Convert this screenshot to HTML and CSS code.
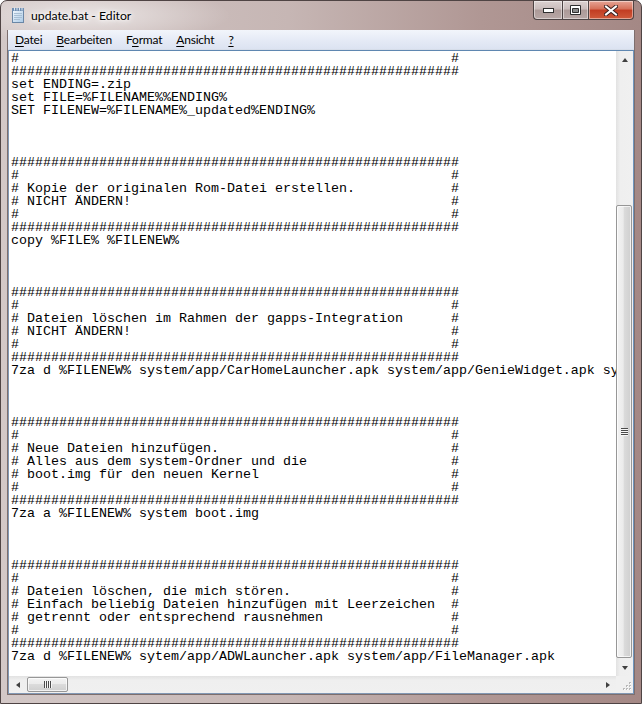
FILE: index.html
```html
<!DOCTYPE html>
<html>
<head>
<meta charset="utf-8">
<title>update.bat - Editor</title>
<link rel="stylesheet" href="styles.css">
</head>
<body>
<div class="window">
  <div class="titlebar">
    <div class="title">
      <svg class="app-icon" width="16" height="16" viewBox="0 0 16 16">
        <defs>
          <linearGradient id="pg" x1="0" y1="0" x2="1" y2="1">
            <stop offset="0" stop-color="#f4f9fe"/>
            <stop offset="1" stop-color="#a9c9e6"/>
          </linearGradient>
        </defs>
        <rect x="2.5" y="2.5" width="11" height="13" fill="url(#pg)" stroke="#6a87a6"/>
        <path d="M4 6.5h8M4 8.5h8M4 10.5h8M4 12.5h6" stroke="#a8bfd4"/>
        <rect x="2" y="1" width="12" height="3" fill="#6f8fb3"/>
        <path d="M4.5 0.5v3M7 0.5v3M9.5 0.5v3M12 0.5v3" stroke="#dfe8f2"/>
      </svg>
      <span class="title-text">update.bat - Editor</span>
    </div>
    <div class="caption-buttons">
      <div class="cbtn cbtn-min">
        <svg width="11" height="5" viewBox="0 0 11 5"><rect x="0.5" y="0.5" width="10" height="4" fill="#fff" stroke="#2f2f2f"/></svg>
      </div>
      <div class="cbtn cbtn-max">
        <svg width="11" height="10" viewBox="0 0 11 10"><path d="M0.5 0.5h10v9h-10z" fill="#fff" stroke="#2f2f2f"/><path d="M2.5 3.5h6v4h-6z" fill="#8a8a8a" stroke="#2f2f2f"/></svg>
      </div>
      <div class="cbtn cbtn-close">
        <svg width="14" height="11" viewBox="0 0 14 11"><path d="M2 1.5l10 8M12 1.5l-10 8" stroke="#3a2020" stroke-width="4" stroke-linecap="square"/><path d="M2 1.5l10 8M12 1.5l-10 8" stroke="#fff" stroke-width="2" stroke-linecap="square"/></svg>
      </div>
    </div>
  </div>

  <div class="client">
    <div class="menubar">
      <span class="menu-item"><u>D</u>atei</span>
      <span class="menu-item"><u>B</u>earbeiten</span>
      <span class="menu-item">F<u>o</u>rmat</span>
      <span class="menu-item"><u>A</u>nsicht</span>
      <span class="menu-item"><u>?</u></span>
    </div>

    <div class="editor">
      <div class="editor-main">
<pre class="text">#                                                      #
########################################################
set ENDING=.zip
set FILE=%FILENAME%%ENDING%
SET FILENEW=%FILENAME%_updated%ENDING%



########################################################
#                                                      #
# Kopie der originalen Rom-Datei erstellen.            #
# NICHT ÄNDERN!                                        #
#                                                      #
########################################################
copy %FILE% %FILENEW%



########################################################
#                                                      #
# Dateien löschen im Rahmen der gapps-Integration      #
# NICHT ÄNDERN!                                        #
#                                                      #
########################################################
7za d %FILENEW% system/app/CarHomeLauncher.apk system/app/GenieWidget.apk system/app/Twitter.apk



########################################################
#                                                      #
# Neue Dateien hinzufügen.                             #
# Alles aus dem system-Ordner und die                  #
# boot.img für den neuen Kernel                        #
#                                                      #
########################################################
7za a %FILENEW% system boot.img



########################################################
#                                                      #
# Dateien löschen, die mich stören.                    #
# Einfach beliebig Dateien hinzufügen mit Leerzeichen  #
# getrennt oder entsprechend rausnehmen                #
#                                                      #
########################################################
7za d %FILENEW% sytem/app/ADWLauncher.apk system/app/FileManager.apk
</pre>
        <div class="vscroll">
          <div class="sb-btn"><span class="arrow arrow-up"></span></div>
          <div class="vtrack">
            <div class="vspacer" style="height:137px"></div>
            <div class="vthumb" style="height:453px"><span class="vgrip"><i></i><i></i><i></i><i></i></span></div>
          </div>
          <div class="sb-btn"><span class="arrow arrow-down"></span></div>
        </div>
      </div>
      <div class="hscroll-row">
        <div class="hscroll">
          <div class="sb-btn"><span class="arrow arrow-left"></span></div>
          <div class="htrack">
            <div class="hthumb" style="width:41px"><span class="hgrip"><i></i><i></i><i></i><i></i></span></div>
          </div>
          <div class="sb-btn"><span class="arrow arrow-right"></span></div>
        </div>
        <div class="size-grip">
          <svg width="17" height="17" viewBox="0 0 17 17">
            <g fill="#b9b9b9">
              <rect x="13" y="6" width="2" height="2"/>
              <rect x="10" y="9" width="2" height="2"/><rect x="13" y="9" width="2" height="2"/>
              <rect x="7" y="12" width="2" height="2"/><rect x="10" y="12" width="2" height="2"/><rect x="13" y="12" width="2" height="2"/>
            </g>
            <g fill="#ffffff">
              <rect x="14" y="7" width="1" height="1"/>
              <rect x="11" y="10" width="1" height="1"/><rect x="14" y="10" width="1" height="1"/>
              <rect x="8" y="13" width="1" height="1"/><rect x="11" y="13" width="1" height="1"/><rect x="14" y="13" width="1" height="1"/>
            </g>
          </svg>
        </div>
      </div>
    </div>
  </div>
</div>
</body>
</html>
```

FILE: styles.css
```css
* { box-sizing: border-box; }

html, body {
  margin: 0;
  padding: 0;
}

body {
  width: 642px;
  height: 704px;
  overflow: hidden;
  background: #ffffff;
  font-family: "Lato", "Noto Sans", sans-serif;
}

.window {
  width: 642px;
  height: 704px;
  display: flex;
  flex-direction: column;
  border: 1px solid #4f4444;
  border-radius: 7px 7px 0 0;
  padding: 0 6px 8px 6px;
  background:
    radial-gradient(ellipse 200px 40px at 90px 14px, rgba(255,255,255,0.55), rgba(255,255,255,0) 70%),
    linear-gradient(90deg, #d3c8c7 0%, #c6b6b4 45%, #b09794 75%, #a48885 100%);
}

/* ---------- title bar ---------- */
.titlebar {
  height: 29px;
  display: flex;
  justify-content: space-between;
  align-items: flex-start;
  flex: none;
}

.title {
  display: flex;
  align-items: center;
  padding: 6px 0 0 3px;
  gap: 5px;
}

.app-icon {
  display: block;
}

.title-text {
  font-family: "Lato", "Noto Sans", sans-serif;
  font-size: 12.2px;
  color: #000;
  text-shadow: 0 0 6px #fff, 0 0 10px #fff, 0 0 3px #fff;
}

.caption-buttons {
  display: flex;
  margin-right: 1px;
}

.cbtn {
  height: 19px;
  display: flex;
  align-items: center;
  justify-content: center;
  border: 1px solid #4e4444;
  border-top: none;
  box-shadow: inset 0 0 0 1px rgba(255,255,255,0.45);
}

.cbtn-min {
  width: 29px;
  border-radius: 0 0 0 4px;
  border-right: none;
  background: linear-gradient(#dcd2d1 0%, #c9bcbb 45%, #ac9a98 50%, #b8a7a5 100%);
}

.cbtn-max {
  width: 26px;
  border-right: none;
  background: linear-gradient(#dcd2d1 0%, #c9bcbb 45%, #ac9a98 50%, #b8a7a5 100%);
}

.cbtn-close {
  width: 46px;
  border-radius: 0 0 4px 0;
  background: linear-gradient(#e6a596 0%, #d46f58 45%, #c23c22 50%, #cf5a3b 100%);
}

/* ---------- client area ---------- */
.client {
  flex: 1;
  display: flex;
  flex-direction: column;
  border: 1px solid #7d6e6d;
  border-top: none;
  min-height: 0;
}

.menubar {
  height: 20px;
  display: flex;
  align-items: center;
  background: linear-gradient(#f2f5fb 0%, #e6ebf6 50%, #dce3f1 100%);
  border-bottom: 1px solid #d6dde9;
  flex: none;
}

.menu-item {
  padding: 0 7px;
  font-family: "Lato", "Noto Sans", sans-serif;
  font-size: 12px;
  letter-spacing: -0.2px;
  color: #000;
  line-height: 19px;
}

.menu-item u {
  text-decoration-thickness: 1px;
  text-underline-offset: 2px;
}

.editor {
  flex: 1;
  display: flex;
  flex-direction: column;
  border: 1px solid #8298b4;
  border-top-color: #5f87b1;
  border-right-color: #6f95bd;
  min-height: 0;
}

.editor-main {
  flex: 1;
  display: flex;
  min-height: 0;
}

.text {
  flex: 1;
  margin: 0;
  padding: 1px 0 0 2px;
  font-family: "Liberation Mono", "DejaVu Sans Mono", monospace;
  font-size: 13.34px;
  line-height: 13px;
  color: #000;
  white-space: pre;
  overflow: hidden;
  background: #fff;
}

/* ---------- scrollbars ---------- */
.vscroll {
  width: 17px;
  display: flex;
  flex-direction: column;
  background: linear-gradient(90deg, #e2e2e2 0%, #efefef 25%, #f0f0f0 100%);
}

.sb-btn {
  width: 17px;
  height: 17px;
  flex: none;
  display: flex;
  align-items: center;
  justify-content: center;
}

.arrow {
  width: 0;
  height: 0;
  display: block;
}

.arrow-up {
  border-left: 3.5px solid transparent;
  border-right: 3.5px solid transparent;
  border-bottom: 4px solid #404040;
}

.arrow-down {
  border-left: 3.5px solid transparent;
  border-right: 3.5px solid transparent;
  border-top: 4px solid #404040;
}

.arrow-left {
  border-top: 3.5px solid transparent;
  border-bottom: 3.5px solid transparent;
  border-right: 4px solid #404040;
}

.arrow-right {
  border-top: 3.5px solid transparent;
  border-bottom: 3.5px solid transparent;
  border-left: 4px solid #404040;
}

.vtrack {
  flex: 1;
  display: flex;
  flex-direction: column;
  padding: 0 1px 0 0;
}

.vthumb {
  flex: none;
  border: 1px solid #979797;
  border-radius: 2px;
  background: linear-gradient(90deg, #f3f3f3 0%, #ebebeb 45%, #dbdbdb 50%, #cfcfcf 100%);
  box-shadow: inset 0 0 0 1px rgba(255,255,255,0.7);
  display: flex;
  align-items: center;
  justify-content: center;
}

.vgrip {
  display: flex;
  flex-direction: column;
  gap: 1px;
}

.vgrip i {
  display: block;
  width: 7px;
  height: 1px;
  background: #4b4b4b;
  box-shadow: 0 1px 0 #f6f6f6;
}

.hscroll-row {
  height: 17px;
  display: flex;
  flex: none;
}

.hscroll {
  flex: 1;
  display: flex;
  background: linear-gradient(#e2e2e2 0%, #efefef 25%, #f0f0f0 100%);
}

.htrack {
  flex: 1;
  display: flex;
  padding: 1px 0 0 1px;
}

.hthumb {
  flex: none;
  height: 15px;
  border: 1px solid #979797;
  border-radius: 2px;
  background: linear-gradient(#f3f3f3 0%, #ebebeb 45%, #dbdbdb 50%, #cfcfcf 100%);
  box-shadow: inset 0 0 0 1px rgba(255,255,255,0.7);
  display: flex;
  align-items: center;
  justify-content: center;
}

.hgrip {
  display: flex;
  gap: 1px;
}

.hgrip i {
  display: block;
  width: 1px;
  height: 7px;
  background: #4b4b4b;
  box-shadow: 1px 0 0 #f6f6f6;
}

.size-grip {
  width: 17px;
  height: 17px;
  background: #f0f0f0;
}

.size-grip svg {
  display: block;
}
```
